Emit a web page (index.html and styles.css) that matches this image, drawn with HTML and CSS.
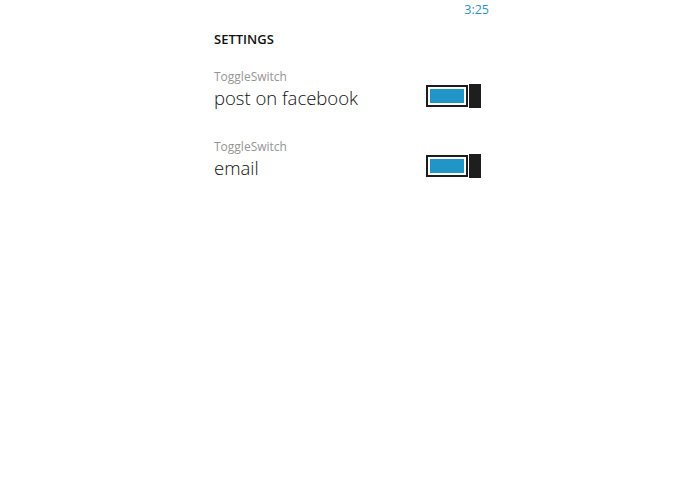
FILE: index.html
```html
<!DOCTYPE html>
<html lang="en">

<head>
    <meta charset="UTF-8">
    <meta name="viewport" content="width=device-width, initial-scale=1.0">
    <title>Settings</title>
    <link rel="stylesheet" href="styles.css">
</head>

<body>
    <div class="phone">
        <div class="status">
            <span class="time">3:25</span>
        </div>
        <div class="page">
            <h1 class="title">SETTINGS</h1>
            <div class="item">
                <div class="text">
                    <p class="header">ToggleSwitch</p>
                    <p class="label">post on facebook</p>
                </div>
                <div class="toggle">
                    <span class="track"><span class="fill"></span></span>
                    <span class="thumb"></span>
                </div>
            </div>
            <div class="item">
                <div class="text">
                    <p class="header">ToggleSwitch</p>
                    <p class="label">email</p>
                </div>
                <div class="toggle">
                    <span class="track"><span class="fill"></span></span>
                    <span class="thumb"></span>
                </div>
            </div>
        </div>
    </div>
</body>

</html>
```

FILE: styles.css
```css
* {
    padding: 0;
    margin: 0;
    border: 0;
}

body {
    background: #fff;
    font-family: "Open Sans", "Noto Sans", sans-serif;
    color: #1a1a1a;
}

.phone {
    width: 283px;
    margin: 0 auto;
}

/* status bar */
.status {
    height: 20px;
    display: flex;
    justify-content: flex-end;
}

.time {
    font-size: 12.5px;
    line-height: 20px;
    color: #2e93bd;
}

.page {
    width: 267px;
    margin-left: 8px;
}

.title {
    font-size: 13px;
    font-weight: 600;
    line-height: 18px;
    padding-top: 10px;
    color: #111;
}

.item {
    display: flex;
    justify-content: space-between;
    align-items: flex-end;
    margin-top: 21px;
}

.item + .item {
    margin-top: 28px;
}

.header {
    font-size: 12px;
    line-height: 16px;
    color: #959595;
}

.label {
    font-size: 18.5px;
    font-weight: 300;
    line-height: 26px;
    color: #111;
}

.toggle {
    display: flex;
    align-items: center;
    margin-bottom: 3px;
}

.track {
    width: 34px;
    height: 14px;
    border: 2px solid #1c1c1c;
    padding: 2px;
    display: block;
}

.fill {
    display: block;
    width: 100%;
    height: 100%;
    background: #2196c6;
}

.thumb {
    width: 12px;
    height: 24px;
    background: #1e1e1e;
    margin-left: 1px;
    display: block;
}
```
